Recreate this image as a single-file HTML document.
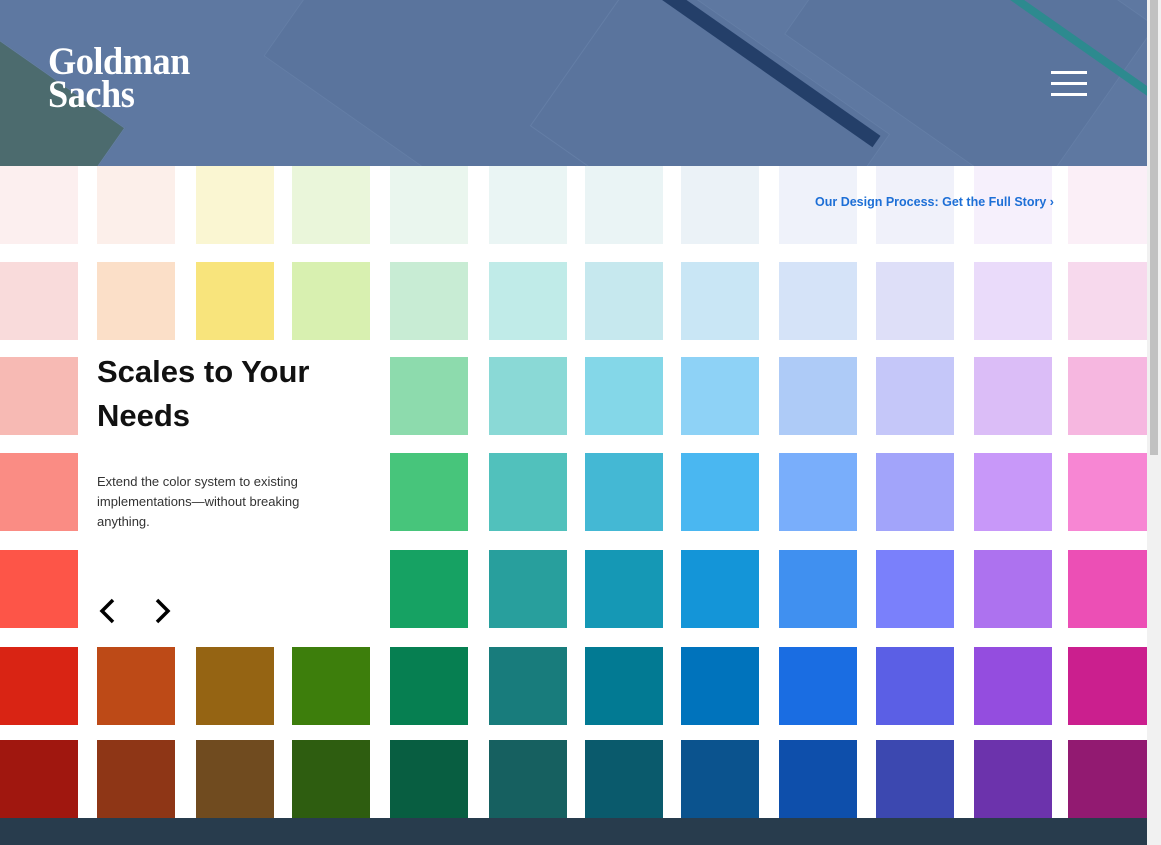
<!DOCTYPE html>
<html><head><meta charset="utf-8"><style>
*{margin:0;padding:0;box-sizing:border-box}
body{width:1161px;height:845px;overflow:hidden;background:#fff;font-family:"Liberation Sans",Roboto,sans-serif;position:relative}
.hdr{position:absolute;left:0;top:0;width:1147px;height:166px;background:#5e78a1;overflow:hidden}
.hdr .s{position:absolute;background:#5a749d;border:1px solid #647ea6;transform:rotate(35deg)}
.hdr .l{position:absolute;background:#243f69;transform:rotate(35deg);height:14px}
.logo{position:absolute;left:48px;top:45px;color:#fff;font-family:"Liberation Serif",serif;font-weight:bold;font-size:39px;line-height:33px;letter-spacing:-0.5px;transform:scaleX(0.93);transform-origin:left}
.burger{position:absolute;left:1051px;top:71px;width:36px}
.burger i{display:block;height:3px;background:#fff;margin-bottom:8px}
.sq{position:absolute;width:78px;height:78px}
.txt{position:absolute;left:78px;top:340px;width:312px;height:300px;background:#fff}
h1{position:absolute;left:97px;top:350px;font-size:31px;line-height:44px;font-weight:bold;color:#111}
p{position:absolute;left:97px;top:472px;width:230px;font-size:13px;line-height:20px;color:#333}
.arr{position:absolute;top:597px}
.link{position:absolute;left:815px;top:195px;color:#1d6fd6;font-size:12.5px;font-weight:bold}
.foot{position:absolute;left:0;top:818px;width:1147px;height:27px;background:#283c4d}
.sb{position:absolute;left:1147px;top:0;width:14px;height:845px;background:#f1f1f1}
.sb i{position:absolute;left:3px;top:0;width:8px;height:455px;background:#c1c1c1}
</style></head><body>
<div class="hdr">
<div class="s" style="left:300px;top:-60px;width:420px;height:260px"></div>
<div class="s" style="left:820px;top:-80px;width:300px;height:220px"></div>
<div class="s" style="left:560px;top:30px;width:300px;height:200px"></div>
<div class="l" style="left:640px;top:60px;width:260px"></div>
<div class="l" style="left:980px;top:40px;width:200px;height:8px;background:#2d8a8f"></div>
<div class="s" style="left:-90px;top:60px;width:180px;height:180px;background:#4c6b6e"></div>
<div class="logo">Goldman<br>Sachs</div>
<div class="burger"><i></i><i></i><i></i></div>
</div>
<div id="g"></div>
<div class="txt"></div>
<h1>Scales to Your<br>Needs</h1>
<p>Extend the color system to existing implementations—without breaking anything.</p>
<svg class="arr" style="left:97px" width="20" height="28" viewBox="0 0 20 28"><path d="M16 3 L5 14 L16 25" fill="none" stroke="#000" stroke-width="3.5"/></svg>
<svg class="arr" style="left:153px" width="20" height="28" viewBox="0 0 20 28"><path d="M4 3 L15 14 L4 25" fill="none" stroke="#000" stroke-width="3.5"/></svg>
<div class="link">Our Design Process: Get the Full Story ›</div>
<div class="foot"></div>
<div class="sb"><i></i></div>
<script>
var xs=[0,97,196,292,390,489,585,681,779,876,974,1068];
var ys=[166,262,357,453,550,647,740];
var c=[
["#fcefef","#fcefea","#faf6d2","#eaf6da","#eaf6ee","#eaf5f4","#eaf4f5","#ebf2f7","#eff2fa","#f0f1fa","#f6f0fc","#fbeff7"],
["#f9dbdb","#fbdfc8","#f8e47c","#d8f0b0","#c8ecd4","#c0ebe8","#c6e8ee","#c9e6f5","#d5e3f8","#dedff8","#eadbfa","#f7d9ed"],
["#f7bab4","","","","#8ddbad","#8ad9d6","#84d7e8","#8ed2f6","#aecbf7","#c5c7f9","#dbbdf7","#f6b7e0"],
["#fa8c84","","","","#47c57b","#51c1bc","#44b8d4","#4ab7f1","#79aefb","#a2a4fa","#c898f9","#f786d3"],
["#fd5548","","","","#16a263","#289f9d","#1598b5","#1495d8","#4090f0","#7a80fb","#ad72ef","#ec4fb5"],
["#d92414","#bd4a17","#956413","#3d7e0c","#067f51","#187c7c","#027a93","#0073bc","#1a6de2","#5b5fe5","#944ddf","#cb1f8e"],
["#a0170f","#8e3616","#704b1f","#2e5d10","#085e41","#166060","#0a5a6c","#0b538e","#0e4fab","#3c48b0","#6c33ac","#921a71"]];
var h="";
for(var r=0;r<7;r++)for(var k=0;k<12;k++){if(!c[r][k])continue;var w=k==11?79:78;h+='<div class="sq" style="left:'+xs[k]+'px;top:'+ys[r]+'px;width:'+w+'px;background:'+c[r][k]+'"></div>';}
document.getElementById("g").innerHTML=h;
</script>
</body></html>
